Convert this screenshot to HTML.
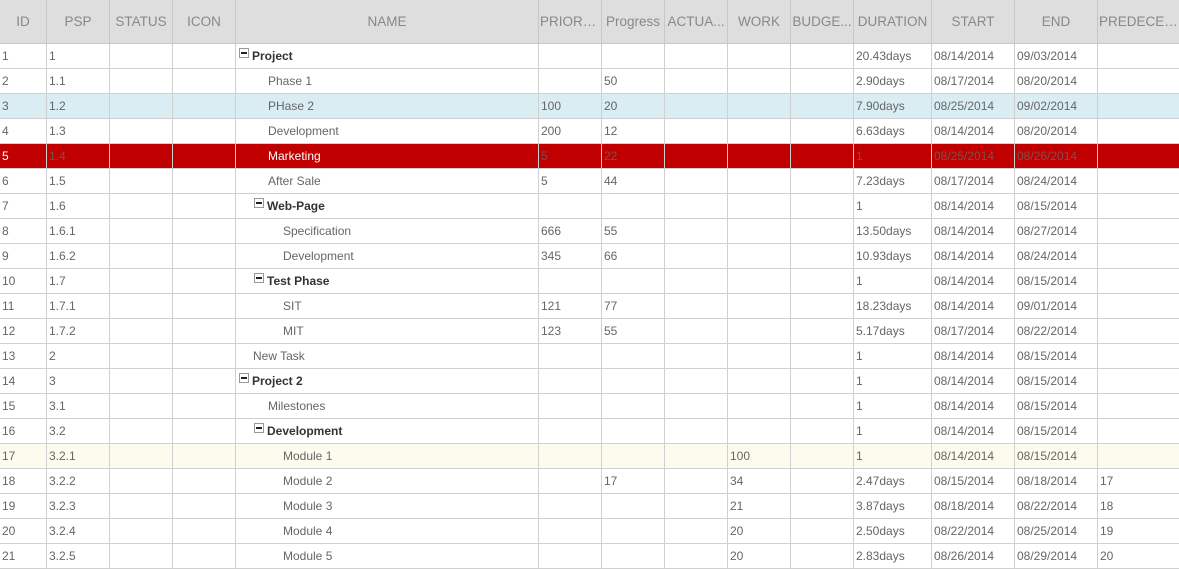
<!DOCTYPE html>
<html><head><meta charset="utf-8"><style>
*{margin:0;padding:0;box-sizing:border-box}
body{width:1179px;height:570px;overflow:hidden;background:#fff;font-family:"Liberation Sans",sans-serif;}
table{border-collapse:collapse;table-layout:fixed;width:1180px;position:absolute;left:-1px;top:0}
th{height:43px;background:#dedede;color:#888;font-weight:normal;font-size:13.5px;border:1px solid #c8c8c8;border-top:none;white-space:nowrap;overflow:hidden;text-overflow:ellipsis;padding:0 1px;}
td{height:25px;border:1px solid #d0d0d0;font-size:12px;color:#666;padding:0 0 0 2px;white-space:nowrap;overflow:hidden}
tr.sel td{background:#daedf3}
tr.red td{background:#c00000;color:#7a5050}
tr.red td.w{color:#fff}
tr.yel td{background:#fdfbee}
b{color:#333}
.bx{display:inline-block;width:10px;height:10px;border:1px solid #999;vertical-align:top;margin-top:-1px;margin-right:3px;position:relative;background:#fff}
.bx:after{content:"";position:absolute;left:1px;right:1px;top:3px;height:2px;background:#222}
</style></head><body>
<table>
<colgroup><col style="width:47px"><col style="width:63px"><col style="width:63px"><col style="width:63px"><col style="width:303px"><col style="width:63px"><col style="width:63px"><col style="width:63px"><col style="width:63px"><col style="width:63px"><col style="width:78px"><col style="width:83px"><col style="width:83px"><col style="width:82px"></colgroup>
<tr><th>ID</th><th>PSP</th><th>STATUS</th><th>ICON</th><th>NAME</th><th>PRIORITY</th><th>Progress</th><th>ACTUA...</th><th>WORK</th><th>BUDGE...</th><th>DURATION</th><th>START</th><th>END</th><th style="text-align:left">PREDECESS...</th></tr>
<tr><td>1</td><td>1</td><td></td><td></td><td style="padding-left:3px"><span class="bx"></span><b>Project</b></td><td></td><td></td><td></td><td></td><td></td><td>20.43days</td><td>08/14/2014</td><td>09/03/2014</td><td></td></tr>
<tr><td>2</td><td>1.1</td><td></td><td></td><td style="padding-left:32px">Phase 1</td><td></td><td>50</td><td></td><td></td><td></td><td>2.90days</td><td>08/17/2014</td><td>08/20/2014</td><td></td></tr>
<tr class="sel"><td>3</td><td>1.2</td><td></td><td></td><td style="padding-left:32px">PHase 2</td><td>100</td><td>20</td><td></td><td></td><td></td><td>7.90days</td><td>08/25/2014</td><td>09/02/2014</td><td></td></tr>
<tr><td>4</td><td>1.3</td><td></td><td></td><td style="padding-left:32px">Development</td><td>200</td><td>12</td><td></td><td></td><td></td><td>6.63days</td><td>08/14/2014</td><td>08/20/2014</td><td></td></tr>
<tr class="red"><td class="w">5</td><td>1.4</td><td></td><td></td><td class="w" style="padding-left:32px">Marketing</td><td>5</td><td>22</td><td></td><td></td><td></td><td>1</td><td>08/25/2014</td><td>08/26/2014</td><td></td></tr>
<tr><td>6</td><td>1.5</td><td></td><td></td><td style="padding-left:32px">After Sale</td><td>5</td><td>44</td><td></td><td></td><td></td><td>7.23days</td><td>08/17/2014</td><td>08/24/2014</td><td></td></tr>
<tr><td>7</td><td>1.6</td><td></td><td></td><td style="padding-left:18px"><span class="bx"></span><b>Web-Page</b></td><td></td><td></td><td></td><td></td><td></td><td>1</td><td>08/14/2014</td><td>08/15/2014</td><td></td></tr>
<tr><td>8</td><td>1.6.1</td><td></td><td></td><td style="padding-left:47px">Specification</td><td>666</td><td>55</td><td></td><td></td><td></td><td>13.50days</td><td>08/14/2014</td><td>08/27/2014</td><td></td></tr>
<tr><td>9</td><td>1.6.2</td><td></td><td></td><td style="padding-left:47px">Development</td><td>345</td><td>66</td><td></td><td></td><td></td><td>10.93days</td><td>08/14/2014</td><td>08/24/2014</td><td></td></tr>
<tr><td>10</td><td>1.7</td><td></td><td></td><td style="padding-left:18px"><span class="bx"></span><b>Test Phase</b></td><td></td><td></td><td></td><td></td><td></td><td>1</td><td>08/14/2014</td><td>08/15/2014</td><td></td></tr>
<tr><td>11</td><td>1.7.1</td><td></td><td></td><td style="padding-left:47px">SIT</td><td>121</td><td>77</td><td></td><td></td><td></td><td>18.23days</td><td>08/14/2014</td><td>09/01/2014</td><td></td></tr>
<tr><td>12</td><td>1.7.2</td><td></td><td></td><td style="padding-left:47px">MIT</td><td>123</td><td>55</td><td></td><td></td><td></td><td>5.17days</td><td>08/17/2014</td><td>08/22/2014</td><td></td></tr>
<tr><td>13</td><td>2</td><td></td><td></td><td style="padding-left:17px">New Task</td><td></td><td></td><td></td><td></td><td></td><td>1</td><td>08/14/2014</td><td>08/15/2014</td><td></td></tr>
<tr><td>14</td><td>3</td><td></td><td></td><td style="padding-left:3px"><span class="bx"></span><b>Project 2</b></td><td></td><td></td><td></td><td></td><td></td><td>1</td><td>08/14/2014</td><td>08/15/2014</td><td></td></tr>
<tr><td>15</td><td>3.1</td><td></td><td></td><td style="padding-left:32px">Milestones</td><td></td><td></td><td></td><td></td><td></td><td>1</td><td>08/14/2014</td><td>08/15/2014</td><td></td></tr>
<tr><td>16</td><td>3.2</td><td></td><td></td><td style="padding-left:18px"><span class="bx"></span><b>Development</b></td><td></td><td></td><td></td><td></td><td></td><td>1</td><td>08/14/2014</td><td>08/15/2014</td><td></td></tr>
<tr class="yel"><td>17</td><td>3.2.1</td><td></td><td></td><td style="padding-left:47px">Module 1</td><td></td><td></td><td></td><td>100</td><td></td><td>1</td><td>08/14/2014</td><td>08/15/2014</td><td></td></tr>
<tr><td>18</td><td>3.2.2</td><td></td><td></td><td style="padding-left:47px">Module 2</td><td></td><td>17</td><td></td><td>34</td><td></td><td>2.47days</td><td>08/15/2014</td><td>08/18/2014</td><td>17</td></tr>
<tr><td>19</td><td>3.2.3</td><td></td><td></td><td style="padding-left:47px">Module 3</td><td></td><td></td><td></td><td>21</td><td></td><td>3.87days</td><td>08/18/2014</td><td>08/22/2014</td><td>18</td></tr>
<tr><td>20</td><td>3.2.4</td><td></td><td></td><td style="padding-left:47px">Module 4</td><td></td><td></td><td></td><td>20</td><td></td><td>2.50days</td><td>08/22/2014</td><td>08/25/2014</td><td>19</td></tr>
<tr><td>21</td><td>3.2.5</td><td></td><td></td><td style="padding-left:47px">Module 5</td><td></td><td></td><td></td><td>20</td><td></td><td>2.83days</td><td>08/26/2014</td><td>08/29/2014</td><td>20</td></tr>
</table>
</body></html>
